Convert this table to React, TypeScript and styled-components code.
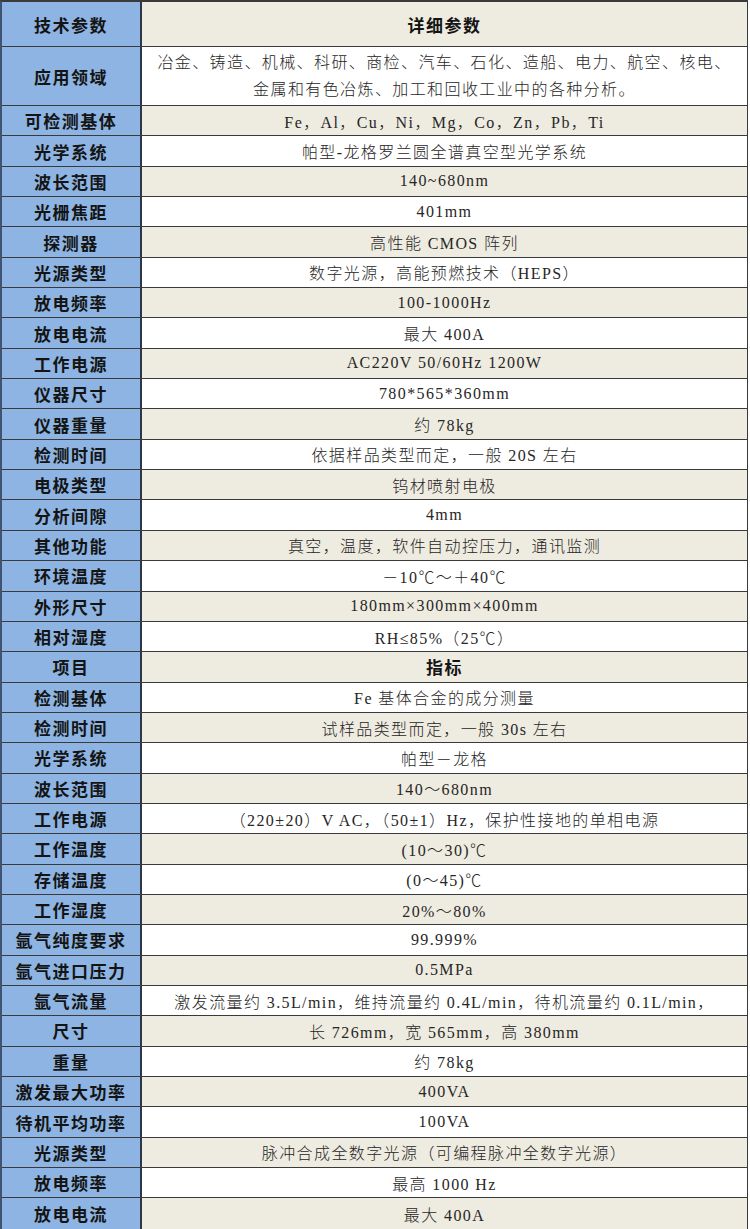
import React from 'react'
import styled, { createGlobalStyle } from 'styled-components'

type Spec = {
  label: string
  value: React.ReactNode
  head?: boolean
  tall?: boolean
}

const specs: Spec[] = [
  { label: '技术参数', value: '详细参数', head: true },
  {
    label: '应用领域',
    value: (
      <>
        冶金、铸造、机械、科研、商检、汽车、石化、造船、电力、航空、核电、
        <br />
        金属和有色冶炼、加工和回收工业中的各种分析。
      </>
    ),
    tall: true,
  },
  { label: '可检测基体', value: 'Fe，Al，Cu，Ni，Mg，Co，Zn，Pb，Ti' },
  { label: '光学系统', value: '帕型-龙格罗兰圆全谱真空型光学系统' },
  { label: '波长范围', value: '140~680nm' },
  { label: '光栅焦距', value: '401mm' },
  { label: '探测器', value: '高性能 CMOS 阵列' },
  { label: '光源类型', value: '数字光源，高能预燃技术（HEPS）' },
  { label: '放电频率', value: '100-1000Hz' },
  { label: '放电电流', value: '最大 400A' },
  { label: '工作电源', value: 'AC220V 50/60Hz 1200W' },
  { label: '仪器尺寸', value: '780*565*360mm' },
  { label: '仪器重量', value: '约 78kg' },
  { label: '检测时间', value: '依据样品类型而定，一般 20S 左右' },
  { label: '电极类型', value: '钨材喷射电极' },
  { label: '分析间隙', value: '4mm' },
  { label: '其他功能', value: '真空，温度，软件自动控压力，通讯监测' },
  { label: '环境温度', value: '－10℃～＋40℃' },
  { label: '外形尺寸', value: '180mm×300mm×400mm' },
  { label: '相对湿度', value: 'RH≤85%（25℃）' },
  { label: '项目', value: '指标', head: true },
  { label: '检测基体', value: 'Fe 基体合金的成分测量' },
  { label: '检测时间', value: '试样品类型而定，一般 30s 左右' },
  { label: '光学系统', value: '帕型－龙格' },
  { label: '波长范围', value: '140～680nm' },
  { label: '工作电源', value: '（220±20）V AC，（50±1）Hz，保护性接地的单相电源' },
  { label: '工作温度', value: '(10～30)℃' },
  { label: '存储温度', value: '(0～45)℃' },
  { label: '工作湿度', value: '20%～80%' },
  { label: '氩气纯度要求', value: '99.999%' },
  { label: '氩气进口压力', value: '0.5MPa' },
  { label: '氩气流量', value: '激发流量约 3.5L/min，维持流量约 0.4L/min，待机流量约 0.1L/min，' },
  { label: '尺寸', value: '长 726mm，宽 565mm，高 380mm' },
  { label: '重量', value: '约 78kg' },
  { label: '激发最大功率', value: '400VA' },
  { label: '待机平均功率', value: '100VA' },
  { label: '光源类型', value: '脉冲合成全数字光源（可编程脉冲全数字光源）' },
  { label: '放电频率', value: '最高 1000 Hz' },
  { label: '放电电流', value: '最大 400A' },
]

// header row, the two-line row, then evenly split rows
const rowHeight = (s: Spec, i: number) => {
  if (i === 0) return 45
  if (s.tall) return 59
  return 30.35
}

const App = () => {
  return (
    <>
      <GlobalStyle />
      <SpecTable>
        {specs.map((s, i) => (
          <SpecRow key={i} $shade={i % 2 === 0} $height={rowHeight(s, i)}>
            <LabelCell>{s.label}</LabelCell>
            <ValueCell $head={s.head} $tall={s.tall}>
              {s.value}
            </ValueCell>
          </SpecRow>
        ))}
      </SpecTable>
    </>
  )
}

export default App

const GlobalStyle = createGlobalStyle`
  body {
    margin: 0;
    background: #ffffff;
  }
`

const SpecTable = styled.div`
  width: 748px;
  box-sizing: border-box;
  border: 1px solid #3a3a3a;
  border-top: 2px solid #3a3a3a;
  border-left: 2px solid #3f5470;
  display: flex;
  flex-direction: column;
`

const SpecRow = styled.div<{ $shade: boolean; $height: number }>`
  display: grid;
  grid-template-columns: 140px 1fr;
  height: ${(p) => p.$height}px;
  box-sizing: border-box;
  background: ${(p) => (p.$shade ? '#eeebe0' : '#ffffff')};
  border-bottom: 1px solid #3a3a3a;
  &:last-child {
    border-bottom: none;
  }
`

const LabelCell = styled.div`
  display: flex;
  align-items: center;
  justify-content: center;
  background: #8db4e2;
  border-right: 2px solid #2c3846;
  font-family: 'Noto Sans CJK SC', sans-serif;
  font-weight: 700;
  font-size: 17px;
  letter-spacing: 1.5px;
  color: #141414;
  white-space: nowrap;
`

const ValueCell = styled.div<{ $head?: boolean; $tall?: boolean }>`
  display: flex;
  align-items: center;
  justify-content: center;
  text-align: center;
  white-space: nowrap;
  color: ${(p) => (p.$head ? '#141414' : '#262626')};
  font-family: ${(p) =>
    p.$head
      ? "'Noto Sans CJK SC', sans-serif"
      : "'Liberation Serif', 'Noto Sans CJK SC', serif"};
  font-weight: ${(p) => (p.$head ? 700 : 300)};
  font-size: ${(p) => (p.$head ? 17 : 16)}px;
  letter-spacing: ${(p) => (p.$head ? 1.5 : 1.4)}px;
  line-height: ${(p) => (p.$tall ? '27px' : 'normal')};
`
